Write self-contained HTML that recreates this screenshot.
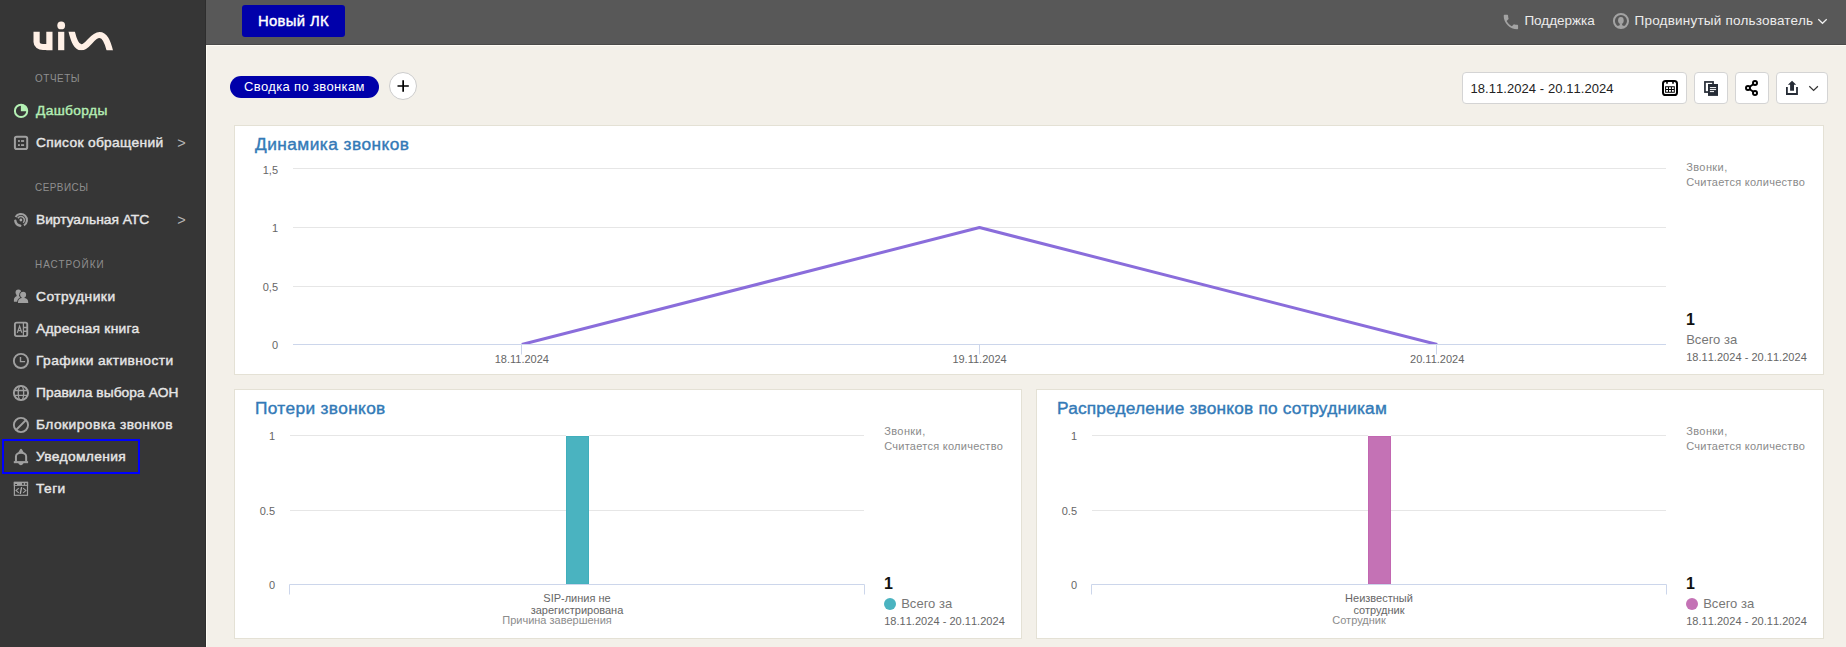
<!DOCTYPE html>
<html lang="ru">
<head>
<meta charset="utf-8">
<title>Дашборды</title>
<style>
html,body{margin:0;padding:0;}
body{width:1846px;height:647px;overflow:hidden;background:#f3f0e9;font-family:"Liberation Sans","DejaVu Sans",sans-serif;position:relative;}
.abs{position:absolute;}
.grp{position:absolute;left:0;top:0;width:0;height:0;}
h3{margin:0;font-weight:normal;}
#sidebar{position:absolute;left:0;top:0;width:206px;height:647px;background:#363636;box-sizing:border-box;border-right:1px solid #2e2e2e;}
#topbar{position:absolute;left:206px;top:0;width:1640px;height:45px;background:#585858;box-sizing:border-box;border-bottom:1px solid #4a4a4a;}
#main{position:absolute;left:206px;top:45px;width:1640px;height:602px;box-sizing:border-box;border-left:1px solid #fffcf5;border-top:1px solid #fffcf5;}
.t{position:absolute;white-space:nowrap;line-height:1;}
.card{position:absolute;background:#fff;border:1px solid #e4e1d5;box-sizing:border-box;}
.btn{position:absolute;top:72px;height:32px;box-sizing:border-box;background:#fff;border:1px solid #d4d4d4;border-radius:4px;}
svg text{font-family:"Liberation Sans",sans-serif;}
</style>
</head>
<body>
<nav id="sidebar">
<svg class="abs" style="left:30px;top:18px" width="90" height="36" viewBox="30 18 90 36">
  <defs><clipPath id="lgc"><rect x="60" y="31.8" width="60" height="18.4"/></clipPath></defs>
  <g fill="none" stroke="#fff0e6" stroke-width="6.2">
    <path d="M36.6 31.8 V42 a6.4 5 0 0 0 6.4 5 H49.4 M49.4 31.8 V50.2"/>
    <path d="M61.2 31.8 V50.2"/>
    <path d="M71.3 30 C74 42 77 47.4 81.5 47.4 C88 47.4 92 35 99.5 35 C104.5 35 107.5 41 110.2 52" clip-path="url(#lgc)"/>
  </g>
  <circle cx="61.2" cy="25.4" r="3.9" fill="#fff0e6"/>
</svg>

<svg class="abs" style="left:0;top:0" width="206" height="647" viewBox="0 0 206 647" fill="none" stroke="#a0a0a0" stroke-width="1.9">
  <!-- dashboards -->
  <circle cx="21.050" cy="110.900" r="6.150" stroke="#b4f0b4" stroke-width="2"/>
  <path d="M20.900 111.200V104.300A6.700 6.700 0 0 1 27.700 111.200Z" fill="#b4f0b4" stroke="none"/>
  <!-- list -->
  <rect x="14.900" y="136.800" width="12.300" height="12.300" rx="1.800" stroke-width="2"/>
  <g fill="#a0a0a0" stroke="none"><rect x="18" y="140.100" width="1.900" height="1.800"/><rect x="21.050" y="140.100" width="3.050" height="1.800"/><rect x="18" y="144.200" width="1.900" height="1.800"/><rect x="21.050" y="144.200" width="3.050" height="1.800"/></g>
  <!-- ATS -->
  <g stroke-linecap="butt">
    <path d="M15.600 216.950A6.100 6.100 0 1 1 23.950 225.300" stroke-width="2.100"/>
    <path d="M17.870 218.250A3.500 3.500 0 1 1 23.150 222.700" stroke-width="1.500"/>
    <path d="M15.300 220.600A5.800 5.800 0 0 0 20.300 225.700" stroke-width="2.400" stroke-linecap="round"/>
  </g>
  <circle cx="20.900" cy="220" r="1.400" fill="#a8a8a8" stroke="none"/>
  <!-- employees -->
  <g fill="#a0a0a0" stroke="none">
    <circle cx="18.400" cy="292.400" r="2.800"/>
    <path d="M13.900 301.800v-1.800c0-2.500 1.900-4 4.200-4h2.500v5.800z"/><rect x="16.600" y="294" width="2.400" height="3"/>
    <g stroke="#363636" stroke-width="1.700" paint-order="stroke">
      <circle cx="23.100" cy="294.800" r="3"/>
      <path d="M18 303.100v-1.200c0-2.400 2-3.900 4.100-3.900h2c2.100 0 4.100 1.500 4.100 3.900v1.200z"/>
    </g>
    <rect x="21.600" y="296.500" width="3" height="2.500"/>
  </g>
  <!-- address book -->
  <rect x="14.900" y="322.650" width="12.350" height="13.500" rx="1.800"/>
  <path d="M23.400 323v13" stroke-width="1.200"/>
  <path d="M23.400 327.450h3.600M23.400 331.350h3.600" stroke-width="1.500"/>
  <path d="M17.300 332.900l2.300-6.700l2.300 6.700M18.200 330.700h2.800" stroke-width="1.200"/>
  <!-- clock -->
  <circle cx="20.960" cy="360.960" r="7.100"/>
  <path d="M20.500 357v4.600h4.600" stroke-width="1.400"/>
  <!-- globe -->
  <circle cx="20.960" cy="393" r="7.100"/>
  <path d="M14.300 390.500h13.400M14.300 395.350h13.400" stroke-width="1.300"/>
  <ellipse cx="20.960" cy="393" rx="2.700" ry="7.100" stroke-width="1.300"/>
  <!-- block -->
  <circle cx="20.960" cy="425" r="7.100"/>
  <path d="M16 430l10-10" stroke-width="1.800"/>
  <!-- bell -->
  <path d="M15.950 461.500v-5a5.100 3.800 0 0 1 10.200 0v5" stroke-width="2"/>
  <path d="M13.800 462.150h14.300" stroke-width="2.100"/>
  <path d="M18.200 452.400l1.800-2.900a1.200 1.200 0 0 1 2 0l1.800 2.900zM18.300 463.100h5.200c-.4 1.300-1.400 2.100-2.600 2.100s-2.200-.8-2.600-2.100z" fill="#a0a0a0" stroke="none"/>
  <!-- tags -->
  <rect x="14.400" y="482.400" width="13.100" height="12.900" stroke-width="1.200"/>
  <rect x="13.800" y="481.800" width="14.300" height="4.100" fill="#a0a0a0" stroke="none"/>
  <g fill="#363636" stroke="none"><rect x="22.050" y="483.100" width="1.750" height="1.700"/><rect x="25.100" y="483.100" width="1.700" height="1.700"/><rect x="15.100" y="484" width="1.900" height="1"/></g>
  <path d="M18.800 488.100l-2.800 2.400l2.800 2.400M23.100 488.100l2.800 2.400l-2.800 2.400" stroke-width="1.100"/>
  <path d="M21.600 487.200l-1.300 6.700" stroke-width="1.300" stroke="#b4b4b4"/>
</svg>

<div class="abs" style="left:2px;top:439px;width:138px;height:35px;box-sizing:border-box;border:2px solid #0000ff;"></div>
<div class="t" id="s1" style="left:35px;top:72.69px;font-size:11px;color:#8f8f8f;letter-spacing:0.630px;transform:scaleX(0.9);transform-origin:0 0;">ОТЧЕТЫ</div>
<div class="t" id="s2" style="left:35px;top:181.69px;font-size:11px;color:#8f8f8f;letter-spacing:0.538px;transform:scaleX(0.9);transform-origin:0 0;">СЕРВИСЫ</div>
<div class="t" id="s3" style="left:35px;top:258.69px;font-size:11px;color:#8f8f8f;letter-spacing:1.125px;transform:scaleX(0.9);transform-origin:0 0;">НАСТРОЙКИ</div>
<div class="t" id="m1" style="left:36px;top:104.00px;font-size:13px;color:#b4eeb4;letter-spacing:0.323px;-webkit-text-stroke:0.4px currentColor;transform:scaleX(1.06);transform-origin:0 0;">Дашборды</div>
<div class="t" id="m2" style="left:36px;top:136.00px;font-size:13px;color:#e6e6e6;letter-spacing:0.301px;-webkit-text-stroke:0.4px currentColor;transform:scaleX(1.06);transform-origin:0 0;">Список обращений</div>
<div class="t" id="m3" style="left:36px;top:213.00px;font-size:13px;color:#e6e6e6;letter-spacing:-0.019px;-webkit-text-stroke:0.4px currentColor;transform:scaleX(1.06);transform-origin:0 0;">Виртуальная АТС</div>
<div class="t" id="m4" style="left:36px;top:290.00px;font-size:13px;color:#e6e6e6;letter-spacing:0.467px;-webkit-text-stroke:0.4px currentColor;transform:scaleX(1.06);transform-origin:0 0;">Сотрудники</div>
<div class="t" id="m5" style="left:36px;top:322.00px;font-size:13px;color:#e6e6e6;letter-spacing:0.244px;-webkit-text-stroke:0.4px currentColor;transform:scaleX(1.06);transform-origin:0 0;">Адресная книга</div>
<div class="t" id="m6" style="left:36px;top:354.00px;font-size:13px;color:#e6e6e6;letter-spacing:0.401px;-webkit-text-stroke:0.4px currentColor;transform:scaleX(1.06);transform-origin:0 0;">Графики активности</div>
<div class="t" id="m7" style="left:36px;top:386.00px;font-size:13px;color:#e6e6e6;letter-spacing:0.061px;-webkit-text-stroke:0.4px currentColor;transform:scaleX(1.06);transform-origin:0 0;">Правила выбора АОН</div>
<div class="t" id="m8" style="left:36px;top:418.00px;font-size:13px;color:#e6e6e6;letter-spacing:0.423px;-webkit-text-stroke:0.4px currentColor;transform:scaleX(1.06);transform-origin:0 0;">Блокировка звонков</div>
<div class="t" id="m9" style="left:36px;top:450.00px;font-size:13px;color:#e6e6e6;letter-spacing:0.333px;-webkit-text-stroke:0.4px currentColor;transform:scaleX(1.06);transform-origin:0 0;">Уведомления</div>
<div class="t" id="m10" style="left:36px;top:482.00px;font-size:13px;color:#e6e6e6;letter-spacing:0.396px;-webkit-text-stroke:0.4px currentColor;transform:scaleX(1.06);transform-origin:0 0;">Теги</div>
<div class="t" id="a1" style="left:177.3px;top:135.73px;font-size:14.5px;color:#b5b5b5;letter-spacing:0.000px;">&gt;</div>
<div class="t" id="a2" style="left:177.3px;top:212.73px;font-size:14.5px;color:#b5b5b5;letter-spacing:0.000px;">&gt;</div>
</nav>
<header id="topbar"></header>
<div class="grp" id="topbar-items">
<div class="abs" style="left:242px;top:5px;width:103px;height:32px;background:#0000aa;border-radius:3px;"></div>
<svg class="abs" style="left:206px;top:0" width="1640" height="45" viewBox="206 0 1640 45" fill="none">
  <!-- phone -->
  <path transform="translate(1501.3 12.45) scale(0.8)" fill="#a3a3a3" d="M6.62 10.79c1.44 2.83 3.76 5.14 6.59 6.59l2.2-2.2c.27-.27.67-.36 1.02-.24 1.12.37 2.33.57 3.57.57.55 0 1 .45 1 1V20c0 .55-.45 1-1 1-9.39 0-17-7.610-17-17 0-.55.45-1 1-1h3.500c.55 0 1 .45 1 1 0 1.250.2 2.450.57 3.570.11.35.03.74-.25 1.020l-2.200 2.200z"/>
  <!-- user -->
  <circle cx="1620.960" cy="20.960" r="7.050" stroke="#a3a3a3" stroke-width="2"/>
  <ellipse cx="1620.900" cy="20.400" rx="2.800" ry="3.400" fill="#a3a3a3"/>
  <path fill="#a3a3a3" d="M1619.800 23.200V25.300C1618.500 25.600 1617.300 26.200 1616.600 27L1621 28.600L1625.300 27C1624.600 26.200 1623.400 25.600 1622.100 25.300V23.200Z"/>
  <!-- top chevron -->
  <path d="M1818.300 19.300l4.200 4l4.200-4" stroke="#f0f0f0" stroke-width="1.200"/>
</svg>

<div class="t" id="tb1" style="left:1524.4px;top:13.57px;font-size:13.5px;color:#ececec;letter-spacing:-0.017px;">Поддержка</div>
<div class="t" id="tb2" style="left:1634.5px;top:13.57px;font-size:13.5px;color:#ececec;letter-spacing:0.213px;">Продвинутый пользователь</div>
<div class="t" id="nlk" style="left:258.4px;top:14.15px;font-size:14px;color:#ffffff;letter-spacing:0.307px;-webkit-text-stroke:0.4px currentColor;transform:scaleX(1.06);transform-origin:0 0;">Новый ЛК</div>
</div>
<main id="main"></main>
<div class="grp" id="toolbar">
<div class="abs" style="left:230px;top:76px;width:149px;height:22px;border-radius:11px;background:#0000aa;"></div>
<div class="abs" style="left:389px;top:72px;width:28px;height:28px;box-sizing:border-box;border-radius:14px;background:#fff;border:1px solid #cccccc;"></div>
<div class="btn" style="left:1462px;width:225px;"></div>
<div class="btn" style="left:1694px;width:34px;"></div>
<div class="btn" style="left:1735px;width:34px;"></div>
<div class="btn" style="left:1776px;width:52px;"></div>
<svg class="abs" style="left:206px;top:0" width="1640" height="120" viewBox="206 0 1640 120" fill="none">
  <!-- plus -->
  <path d="M397.500 86h11.300M403.150 80.350v11.300" stroke="#000" stroke-width="1.700"/>
  <!-- calendar -->
  <rect x="1663" y="81" width="14" height="14" rx="2.600" stroke="#000" stroke-width="2"/>
  <path d="M1667 80v3.800M1673 80v3.800" stroke="#000" stroke-width="1.600"/>
  <path fill="#000" fill-rule="evenodd" d="M1665.100 86.200h9.700v6.500h-9.700zM1666.100 87.200v1.900h1.900v-1.900zM1669 87.200v1.900h1.900v-1.900zM1671.900 87.200v1.900h1.900v-1.900zM1666.100 90v1.800h1.900v-1.800zM1669 90v1.800h1.900v-1.800zM1671.900 90v1.800h1.900v-1.800z"/>
  <!-- copy -->
  <rect x="1704.950" y="81.950" width="8.100" height="10.100" stroke="#262c36" stroke-width="1.700"/>
  <rect x="1708" y="84" width="10" height="11.900" fill="#262c36"/>
  <path d="M1709.900 87.600h6.200M1709.900 89.600h6.200M1709.900 91.600h4.100" stroke="#fff" stroke-width="1"/>
  <!-- share -->
  <g stroke="#000">
    <path d="M1755 83L1748 88L1755 93.100" stroke-width="1.800"/>
    <circle cx="1755" cy="83" r="2.050" stroke-width="1.900" fill="#fff"/>
    <circle cx="1748" cy="88" r="2.050" stroke-width="1.900" fill="#fff"/>
    <circle cx="1755" cy="93.100" r="2.050" stroke-width="1.900" fill="#fff"/>
  </g>
  <!-- export -->
  <path d="M1786.900 87.100v6.900h10.100v-6.900" stroke="#262c36" stroke-width="1.800"/>
  <path d="M1792.050 80.800l4.150 3.950h-2.200v5.950h-3.900v-5.950h-2.200z" fill="#262c36"/>
  <path d="M1809.300 86.200l4.300 4.200l4.300-4.200" stroke="#333" stroke-width="1.200"/>
</svg>

<div class="t" id="pill" style="left:244px;top:80.00px;font-size:13px;color:#ffffff;letter-spacing:0.365px;">Сводка по звонкам</div>
<div class="t" id="date" style="left:1470.5px;top:82.00px;font-size:13px;color:#222222;letter-spacing:0.060px;font-kerning:none;">18.11.2024 - 20.11.2024</div>
</div>
<div class="grp" id="dashboard">
<section class="card" style="left:234px;top:125px;width:1590px;height:250px;"></section>
<section class="card" style="left:234px;top:389px;width:788px;height:250px;"></section>
<section class="card" style="left:1036px;top:389px;width:788px;height:250px;"></section>
<svg class="abs" style="left:0;top:0" width="1846" height="647" viewBox="0 0 1846 647">
<defs><clipPath id="cp1"><rect x="293" y="160" width="1373" height="184"/></clipPath></defs>
<path d="M293 168.5H1666" stroke="#e6e6e6" stroke-width="1" fill="none"/>
<path d="M293 227.5H1666" stroke="#e6e6e6" stroke-width="1" fill="none"/>
<path d="M293 286.5H1666" stroke="#e6e6e6" stroke-width="1" fill="none"/>
<path d="M293 344.5H1666" stroke="#ccd6eb" stroke-width="1" fill="none"/>
<path d="M521.5 344.5V354.5" stroke="#ccd6eb" stroke-width="1" fill="none"/>
<path d="M979.5 344.5V354.5" stroke="#ccd6eb" stroke-width="1" fill="none"/>
<path d="M1436.5 344.5V354.5" stroke="#ccd6eb" stroke-width="1" fill="none"/>
<path d="M521.8 344.5L979.5 227.5L1437.2 344.5" stroke="#8a6ddb" stroke-width="3" fill="none" stroke-linejoin="round" clip-path="url(#cp1)"/>
<text x="278" y="174" text-anchor="end" font-size="11" fill="#666">1,5</text>
<text x="278" y="232" text-anchor="end" font-size="11" fill="#666">1</text>
<text x="278" y="291" text-anchor="end" font-size="11" fill="#666">0,5</text>
<text x="278" y="349" text-anchor="end" font-size="11" fill="#666">0</text>
<text x="521.8" y="363" text-anchor="middle" font-size="11" fill="#666">18.11.2024</text>
<text x="979.5" y="363" text-anchor="middle" font-size="11" fill="#666">19.11.2024</text>
<text x="1437.2" y="363" text-anchor="middle" font-size="11" fill="#666">20.11.2024</text>
<path d="M290 435.5H864" stroke="#e6e6e6" stroke-width="1" fill="none"/>
<path d="M290 510.5H864" stroke="#e6e6e6" stroke-width="1" fill="none"/>
<path d="M566 435.5H589" stroke="#fff" stroke-width="1" fill="none"/>
<rect x="566.5" y="436.5" width="22" height="147.5" fill="#4ab3c0" stroke="#40aebc" stroke-width="1"/>
<path d="M289.5 594.5V584.5H864.5V594.5" stroke="#ccd6eb" stroke-width="1" fill="none"/>
<text x="275" y="440" text-anchor="end" font-size="11" fill="#666">1</text>
<text x="275" y="515" text-anchor="end" font-size="11" fill="#666">0.5</text>
<text x="275" y="589" text-anchor="end" font-size="11" fill="#666">0</text>
<text x="577" y="602" text-anchor="middle" font-size="11" fill="#666">SIP-линия не</text>
<text x="577" y="614" text-anchor="middle" font-size="11" fill="#666">зарегистрирована</text>
<text x="557" y="624" text-anchor="middle" font-size="11" fill="#8c8c8c">Причина завершения</text>
<circle cx="890" cy="604" r="6" fill="#4ab3c0"/>
<path d="M1092 435.5H1666" stroke="#e6e6e6" stroke-width="1" fill="none"/>
<path d="M1092 510.5H1666" stroke="#e6e6e6" stroke-width="1" fill="none"/>
<path d="M1368 435.5H1391" stroke="#fff" stroke-width="1" fill="none"/>
<rect x="1368.5" y="436.5" width="22" height="147.5" fill="#c472b5" stroke="#c267b1" stroke-width="1"/>
<path d="M1091.5 594.5V584.5H1666.5V594.5" stroke="#ccd6eb" stroke-width="1" fill="none"/>
<text x="1077" y="440" text-anchor="end" font-size="11" fill="#666">1</text>
<text x="1077" y="515" text-anchor="end" font-size="11" fill="#666">0.5</text>
<text x="1077" y="589" text-anchor="end" font-size="11" fill="#666">0</text>
<text x="1379" y="602" text-anchor="middle" font-size="11" fill="#666">Неизвестный</text>
<text x="1379" y="614" text-anchor="middle" font-size="11" fill="#666">сотрудник</text>
<text x="1359" y="624" text-anchor="middle" font-size="11" fill="#8c8c8c">Сотрудник</text>
<circle cx="1692" cy="604" r="6" fill="#c472b5"/>
</svg>
<h3 class="t" id="c1" style="left:255.3px;top:136.66px;font-size:16px;color:#337ab7;letter-spacing:0.432px;-webkit-text-stroke:0.38px currentColor;transform:scaleX(1.08);transform-origin:0 0;">Динамика звонков</h3>
<h3 class="t" id="c2" style="left:255.3px;top:400.66px;font-size:16px;color:#337ab7;letter-spacing:0.331px;-webkit-text-stroke:0.38px currentColor;transform:scaleX(1.08);transform-origin:0 0;">Потери звонков</h3>
<h3 class="t" id="c3" style="left:1057.3px;top:400.66px;font-size:16px;color:#337ab7;letter-spacing:0.175px;-webkit-text-stroke:0.38px currentColor;transform:scaleX(1.08);transform-origin:0 0;">Распределение звонков по сотрудникам</h3>
<div class="t" id="l1a" style="left:1686.2px;top:161.69px;font-size:11px;color:#8a8a8a;letter-spacing:0.404px;">Звонки,</div>
<div class="t" id="l1b" style="left:1686.2px;top:176.69px;font-size:11px;color:#8a8a8a;letter-spacing:0.268px;">Считается количество</div>
<div class="t" id="l1c" style="left:1685.9px;top:312.46px;font-size:16px;color:#111111;letter-spacing:0.000px;font-weight:bold;">1</div>
<div class="t" id="l1d" style="left:1686.2px;top:333.00px;font-size:13px;color:#777777;letter-spacing:0.016px;">Всего за</div>
<div class="t" id="l1e" style="left:1686.2px;top:351.69px;font-size:11px;color:#666666;letter-spacing:0.032px;font-kerning:none;">18.11.2024 - 20.11.2024</div>
<div class="t" id="l2a" style="left:884.2px;top:425.69px;font-size:11px;color:#8a8a8a;letter-spacing:0.404px;">Звонки,</div>
<div class="t" id="l2b" style="left:884.2px;top:440.69px;font-size:11px;color:#8a8a8a;letter-spacing:0.268px;">Считается количество</div>
<div class="t" id="l2c" style="left:883.9000000000001px;top:576.46px;font-size:16px;color:#111111;letter-spacing:0.000px;font-weight:bold;">1</div>
<div class="t" id="l2d" style="left:901.2px;top:597.00px;font-size:13px;color:#777777;letter-spacing:0.016px;">Всего за</div>
<div class="t" id="l2e" style="left:884.2px;top:615.69px;font-size:11px;color:#666666;letter-spacing:0.032px;font-kerning:none;">18.11.2024 - 20.11.2024</div>
<div class="t" id="l3a" style="left:1686.2px;top:425.69px;font-size:11px;color:#8a8a8a;letter-spacing:0.404px;">Звонки,</div>
<div class="t" id="l3b" style="left:1686.2px;top:440.69px;font-size:11px;color:#8a8a8a;letter-spacing:0.268px;">Считается количество</div>
<div class="t" id="l3c" style="left:1685.9px;top:576.46px;font-size:16px;color:#111111;letter-spacing:0.000px;font-weight:bold;">1</div>
<div class="t" id="l3d" style="left:1703.2px;top:597.00px;font-size:13px;color:#777777;letter-spacing:0.016px;">Всего за</div>
<div class="t" id="l3e" style="left:1686.2px;top:615.69px;font-size:11px;color:#666666;letter-spacing:0.032px;font-kerning:none;">18.11.2024 - 20.11.2024</div>
</div>
</body>
</html>
